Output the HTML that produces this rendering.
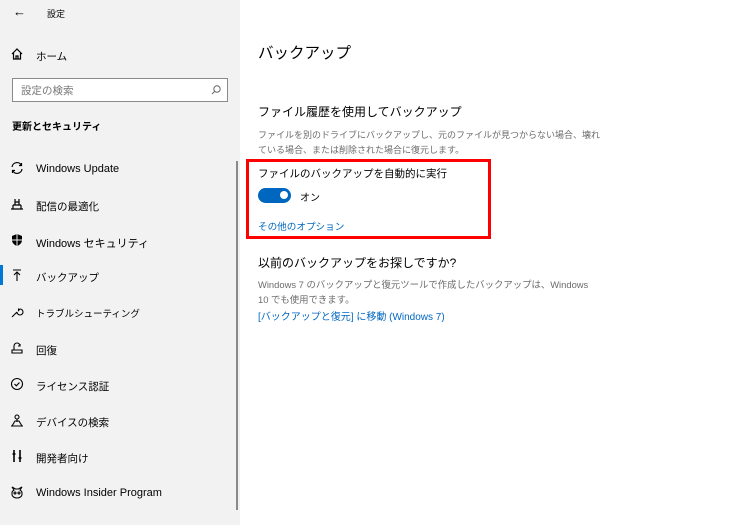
<!DOCTYPE html><html><head><meta charset="utf-8"><style>
*{margin:0;padding:0;box-sizing:border-box}
body{width:750px;height:525px;background:#fff;font-family:"Liberation Sans","Noto Sans CJK JP",sans-serif;position:relative;overflow:hidden;color:#000}
.side{position:absolute;left:0;top:0;width:240px;height:525px;background:#f2f2f2}
.t{position:absolute;white-space:nowrap}
.nav{font-size:10.5px;left:36px;margin-top:2px}
.ic{position:absolute;left:10px;width:14px;height:14px}
.sb{position:absolute;left:236px;top:161px;width:2px;height:349px;background:#8a8a8a}
.red{position:absolute;left:246px;top:159px;width:245px;height:80px;border:3px solid #f00}
.gray{color:#6b6b6b;font-size:9px;line-height:15px}
.link{color:#0067c0;font-size:9.6px}
</style></head><body>
<div class="side">
<div class="t" style="left:13px;top:4px;font-size:13px">←</div>
<div class="t" style="left:47px;top:7px;font-size:9px">設定</div>
<svg class="ic" style="top:47px" viewBox="0 0 14 14" fill="none" stroke="#000" stroke-width="1.2"><path d="M2 7L7 2L12 7M3.5 6V12H10.5V6M6 12V9H8V12"/></svg>
<div class="t nav" style="top:47px">ホーム</div>
<div style="position:absolute;left:12px;top:78px;width:216px;height:24px;border:1px solid #8a8a8a;background:#fff"></div>
<div class="t" style="left:21px;top:83px;font-size:10.5px;color:#777">設定の検索</div>
<svg style="position:absolute;left:210px;top:84px" width="12" height="12" viewBox="0 0 12 12" fill="none" stroke="#666"><circle cx="7" cy="5" r="3.2"/><path d="M4.8 7.3L2 10"/></svg>
<div class="t" style="left:12px;top:118px;font-size:10px;font-weight:bold">更新とセキュリティ</div>
<svg class="ic" style="top:161px" viewBox="0 0 14 14" fill="none" stroke="#000" stroke-width="1.2"><path d="M2 6A5 5 0 0 1 11.5 4.5M12 8A5 5 0 0 1 2.5 9.5M11.5 2V4.5H9M2.5 12V9.5H5"/></svg>
<div class="t nav" style="top:161px;font-size:11px">Windows Update</div>
<svg class="ic" style="top:197px" viewBox="0 0 14 14" fill="none" stroke="#000" stroke-width="1.2"><path d="M1 12H13M3 8V12M11 8V12M3 8H11M5 2V8M9 2V8M5 5H9"/></svg>
<div class="t nav" style="top:197px">配信の最適化</div>
<svg class="ic" style="top:233px" viewBox="0 0 14 14"><path d="M7 1L12 3V7C12 10 9.5 12 7 13C4.5 12 2 10 2 7V3Z" fill="#000"/><path d="M7 1V13M2 7H12" stroke="#f2f2f2" stroke-width="1"/></svg>
<div class="t nav" style="top:233px;font-size:11px">Windows セキュリティ</div>
<div style="position:absolute;left:0;top:265px;width:3px;height:20px;background:#0078d7"></div>
<svg class="ic" style="top:268px" viewBox="0 0 14 14" fill="none" stroke="#000" stroke-width="1.1"><path d="M3 2H11M7 4V13M4 7L7 4L10 7"/></svg>
<div class="t nav" style="top:268px">バックアップ</div>
<svg class="ic" style="top:305px" viewBox="0 0 14 14" fill="none" stroke="#000" stroke-width="1.1"><path d="M2 12L7 7M7 7A3 3 0 1 0 10 4L8.5 5.5L8.5 3.5"/></svg>
<div class="t nav" style="top:304px;font-size:9.5px">トラブルシューティング</div>
<svg class="ic" style="top:341px" viewBox="0 0 14 14" fill="none" stroke="#000" stroke-width="1.1"><path d="M2 12H12V9H2ZM4 9V5A3 3 0 0 1 10 5M8 5H10V3"/></svg>
<div class="t nav" style="top:341px">回復</div>
<svg class="ic" style="top:377px" viewBox="0 0 14 14" fill="none" stroke="#000" stroke-width="1.1"><circle cx="7" cy="7" r="5.5"/><path d="M4.5 7L6.3 8.8L9.5 5.5"/></svg>
<div class="t nav" style="top:377px">ライセンス認証</div>
<svg class="ic" style="top:413px" viewBox="0 0 14 14" fill="none" stroke="#000" stroke-width="1.1"><circle cx="7" cy="4" r="2"/><path d="M7 6V9M2 13L5 8H9L12 13M1 13H13"/></svg>
<div class="t nav" style="top:413px">デバイスの検索</div>
<svg class="ic" style="top:449px" viewBox="0 0 14 14" fill="none" stroke="#000" stroke-width="1.6"><path d="M4 1V13M10 1V13M2.5 5H5.5M8.5 9H11.5"/></svg>
<div class="t nav" style="top:449px">開発者向け</div>
<svg class="ic" style="top:485px" viewBox="0 0 14 14" fill="none" stroke="#000" stroke-width="1.1"><path d="M2 2L4 5A4 4 0 0 0 2 9C2 12 5 13 7 13C9 13 12 12 12 9A4 4 0 0 0 10 5L12 2L8.5 4H5.5Z"/><circle cx="5" cy="8" r="1"/><circle cx="9" cy="8" r="1"/></svg>
<div class="t nav" style="top:485px;font-size:11px">Windows Insider Program</div>
<div class="sb"></div>
</div>
<div class="t" style="left:258px;top:41px;font-size:15.5px">バックアップ</div>
<div class="t" style="left:258px;top:103px;font-size:12px">ファイル履歴を使用してバックアップ</div>
<div class="t gray" style="left:258px;top:128px">ファイルを別のドライブにバックアップし、元のファイルが見つからない場合、壊れ<br>ている場合、または削除された場合に復元します。</div>
<div class="red"></div>
<div class="t" style="left:258px;top:166px;font-size:10.5px">ファイルのバックアップを自動的に実行</div>
<div style="position:absolute;left:258px;top:188px;width:33px;height:15px;border-radius:8px;background:#0067c0"></div>
<div style="position:absolute;left:280px;top:191px;width:8px;height:8px;border-radius:4px;background:#fff"></div>
<div class="t" style="left:300px;top:189px;font-size:10px">オン</div>
<div class="t link" style="left:258px;top:219px">その他のオプション</div>
<div class="t" style="left:258px;top:254px;font-size:12px">以前のバックアップをお探しですか?</div>
<div class="t gray" style="left:258px;top:277px;font-size:9.4px">Windows 7 のバックアップと復元ツールで作成したバックアップは、Windows<br>10 でも使用できます。</div>
<div class="t link" style="left:258px;top:308px;font-size:10px">[バックアップと復元] に移動 (Windows 7)</div>
</body></html>
